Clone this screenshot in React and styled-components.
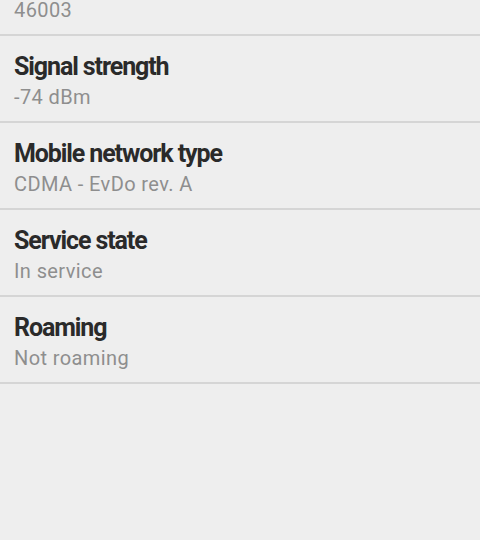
import styled, { createGlobalStyle } from "styled-components";

const GlobalStyle = createGlobalStyle`
  html, body {
    margin     : 0       ;
    padding    : 0       ;
    background : #eeeeee ;
  }
  body {
    font-family : Roboto, "Noto Sans", sans-serif ;
  }
`;

const StyledScreen = styled.div`
  width      : 480px   ;
  height     : 540px   ;
  overflow   : hidden  ;
  background : #eeeeee ;
`;

const StyledList = styled.ul`
  list-style : none ;
  margin     : 0    ;
  padding    : 0    ;
`;

const StyledRow = styled.li`
  display        : flex                 ;
  flex-direction : column               ;
  padding        : ${(p) => (p.$clipped ? "0" : "16px")} 14px 0 ;
  height         : ${(p) => (p.$clipped ? "36px" : "87px")} ;
  box-sizing     : border-box           ;
  border-bottom  : 2px solid #d5d5d5     ;
`;

const StyledTitle = styled.span`
  color          : #2a2a2a ;
  font-size      : 25px    ;
  font-weight    : 700     ;
  line-height    : 30px    ;
  letter-spacing : -1.1px  ;
`;

const StyledValue = styled.span`
  color          : #8e8e8e ;
  font-size      : 20px    ;
  font-weight    : 400     ;
  line-height    : ${(p) => (p.$clipped ? "21px" : "26px")} ;
  letter-spacing : 0.4px   ;
  margin-top     : ${(p) => (p.$clipped ? "0" : "2px")} ;
`;

const rows = [
  { title: "Signal strength", value: "-74 dBm" },
  { title: "Mobile network type", value: "CDMA - EvDo rev. A" },
  { title: "Service state", value: "In service" },
  { title: "Roaming", value: "Not roaming" },
];

export default function App() {
  return (
    <StyledScreen>
      <GlobalStyle />
      <StyledList>
        <StyledRow $clipped>
          <StyledValue $clipped>46003</StyledValue>
        </StyledRow>
        {rows.map((row) => (
          <StyledRow key={row.title}>
            <StyledTitle>{row.title}</StyledTitle>
            <StyledValue>{row.value}</StyledValue>
          </StyledRow>
        ))}
      </StyledList>
    </StyledScreen>
  );
}
